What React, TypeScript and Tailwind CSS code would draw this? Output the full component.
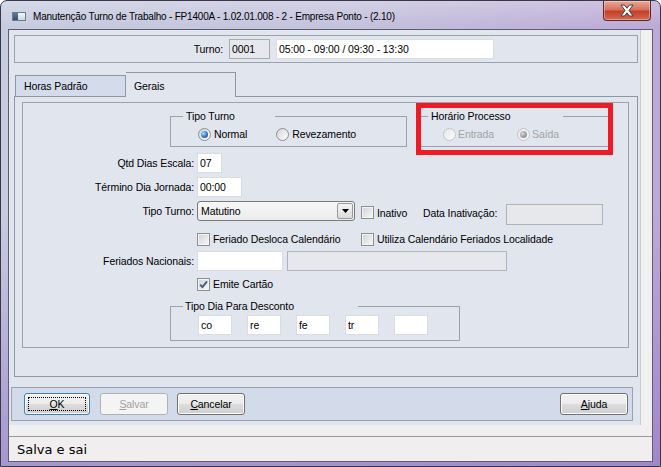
import React from 'react';

// Win7-style form: Manutenção Turno de Trabalho
type Kids = { children?: React.ReactNode };

function Radio({ checked = false, disabled = false }: { checked?: boolean; disabled?: boolean }) {
  return (
    <span
      className={
        disabled
          ? 'w-[13px] h-[13px] rounded-full border border-[#c2c4c7] bg-[linear-gradient(135deg,#e6e7e9,#fbfbfb)] flex items-center justify-center shrink-0'
          : 'w-[13px] h-[13px] rounded-full border border-[#8b8e92] bg-[linear-gradient(135deg,#d3d5d8,#fdfdfd)] flex items-center justify-center shrink-0'
      }
    >
      {checked && !disabled && (
        <span className="w-[7px] h-[7px] rounded-full bg-[radial-gradient(circle_at_35%_35%,#b5e0ff,#2f74c6_55%,#174a8c)]" />
      )}
      {checked && disabled && (
        <span className="w-[7px] h-[7px] rounded-full bg-[radial-gradient(circle_at_35%_35%,#d8d8d8,#9a9a9a_60%,#7d7d7d)]" />
      )}
    </span>
  );
}

function Check({ checked = false }: { checked?: boolean }) {
  return (
    <span className="w-[13px] h-[13px] border border-[#8e8f8f] bg-[linear-gradient(135deg,#cfd2d6,#f9f9f9)] shadow-[inset_0_0_0_1px_#f3f3f3] flex items-center justify-center shrink-0">
      {checked && (
        <svg width="11" height="11" viewBox="0 0 11 11">
          <path d="M2.2 5.6 L4.4 8.2 L9 2.4" fill="none" stroke="#4a6088" strokeWidth="2" strokeLinejoin="round" />
        </svg>
      )}
    </span>
  );
}

function GroupBox({ title, className, legendClass, children }: Kids & { title: string; className: string; legendClass: string }) {
  return (
    <fieldset className={className}>
      <legend className={legendClass}>{title}</legend>
      {children}
    </fieldset>
  );
}

function WinButton({ children, focused = false, disabled = false, className = '' }: Kids & { focused?: boolean; disabled?: boolean; className?: string }) {
  if (disabled) {
    return (
      <div className={`h-[22px] rounded-[3px] border border-[#adb2b5] bg-[#f4f4f4] text-[#a0a0a0] flex items-center justify-center ${className}`}>
        {children}
      </div>
    );
  }
  return (
    <div
      className={`relative h-[22px] rounded-[3px] border ${focused ? 'border-[#3c7fb1]' : 'border-[#707070]'} bg-[linear-gradient(to_bottom,#f2f2f2_0%,#ebebeb_50%,#dddddd_51%,#cfcfcf_100%)] shadow-[inset_0_0_0_1px_#fbfbfb] flex items-center justify-center ${className}`}
    >
      {focused && <span className="absolute inset-[3px] border border-dotted border-black" />}
      <span className="relative">{children}</span>
    </div>
  );
}

export default function App() {
  return (
    <div className="w-[661px] h-[467px] overflow-hidden bg-white font-['Liberation_Sans',Arial,sans-serif] text-[10.5px] leading-[13px] tracking-[-0.1px] text-black">
      {/* window frame */}
      <div className="w-[661px] h-[467px] rounded-t-[7px] border border-[#3a3848] bg-[linear-gradient(180deg,rgba(255,255,255,0.25)_0%,rgba(255,255,255,0)_25px,rgba(0,0,0,0)_45%,rgba(140,105,195,0.55)_100%),linear-gradient(90deg,#c7cde0_0%,#c4c1dc_55%,#bcaad6_100%)] flex flex-col">
        {/* title bar */}
        <div className="h-[28px] flex items-start shrink-0">
          <div className="mt-[11px] ml-[11px] w-[14px] h-[9px] border border-[#6c7a8c] flex">
            <span className="w-[5px] h-full bg-[linear-gradient(#5d7a98,#35506e)]" />
            <span className="flex-1 h-full bg-[linear-gradient(#f4f6f8,#cfd6de)]" />
          </div>
          <div className="ml-[7px] mt-[9px] text-[10px] leading-[13px] tracking-[-0.2px] text-black whitespace-nowrap">
            Manutenção Turno de Trabalho - FP1400A - 1.02.01.008 - 2 - Empresa Ponto - (2.10)
          </div>
          <div className="ml-auto mr-[9px] w-[48px] h-[20px] rounded-b-[4px] border border-t-0 border-[#5a2a26] bg-[linear-gradient(180deg,#e9a898_0%,#d8705c_45%,#c3412b_55%,#d46a4e_100%)] shadow-[inset_0_0_0_1px_rgba(255,255,255,0.35)] flex items-center justify-center">
            <svg width="16" height="13" viewBox="0 0 16 13">
              <path
                d="M2 1 H5.5 L8 4.2 L10.5 1 H14 L10 6.5 L14 12 H10.5 L8 8.8 L5.5 12 H2 L6 6.5 Z"
                fill="#ffffff"
                stroke="#4b3a3a"
                strokeWidth="1"
                strokeLinejoin="round"
              />
            </svg>
          </div>
        </div>

        {/* client area */}
        <div className="ml-[7px] w-[645px] h-[433px] border border-[#5f5c70] bg-[#f0f0f0] flex flex-col">
          {/* main panel */}
          <div className="w-[632px] h-[395px] bg-[#e1e5ee] border-r border-[#c6cad2] flex flex-col">
            {/* top group */}
            <div className="mt-[5px] ml-[5px] w-[624px] h-[28px] border border-[#9ba2ad] flex items-center">
              <div className="w-[208px] text-right">Turno:</div>
              <div className="ml-[6px] w-[41px] h-[20px] border border-[#a9acb3] bg-[#e6e8ec] pl-[2px] leading-[18px]">0001</div>
              <div className="ml-[6px] w-[218px] h-[20px] border border-[#d9dce2] bg-white pl-[2px] leading-[18px]">
                05:00 - 09:00 / 09:30 - 13:30
              </div>
            </div>

            {/* tabs */}
            <div className="mt-[9px] ml-[6px] h-[24px] flex items-end relative z-10">
              <div className="w-[111px] h-[21px] border border-b-0 border-[#8d98a7] bg-[#d4dcec] pl-[8px] leading-[20px]">
                Horas Padrão
              </div>
              <div className="w-[110px] h-[25px] -mb-px border border-b-0 border-l-0 border-[#8d98a7] bg-[#e1e5ee] pl-[8px] leading-[26px]">
                Gerais
              </div>
            </div>

            {/* tab page */}
            <div className="ml-[5px] w-[624px] h-[281px] border border-[#8d98a7] flex flex-col">
              <div className="relative mt-[5px] ml-[7px] w-[607px] h-[246px] border border-[#9ba2ad] flex flex-col">
                {/* group row */}
                <div className="mt-[7px] flex items-start">
                  <GroupBox
                    title="Tipo Turno"
                    className="ml-[147px] w-[237px] h-[37px] border border-[#9ba2ad]"
                    legendClass="ml-[12px] w-[92px] pl-[3px] leading-[13px]"
                  >
                    <div className="mt-[5px] flex items-center">
                      <span className="ml-[27px]"><Radio checked /></span>
                      <span className="ml-[3px]">Normal</span>
                      <span className="ml-[29px]"><Radio /></span>
                      <span className="ml-[3px]">Revezamento</span>
                    </div>
                  </GroupBox>
                  <GroupBox
                    title="Horário Processo"
                    className="ml-[13px] w-[190px] h-[37px] border border-[#9ba2ad]"
                    legendClass="ml-[7px] w-[135px] pl-[3px] leading-[13px]"
                  >
                    <div className="mt-[5px] flex items-center text-[#a3a3a3]">
                      <span className="ml-[22px]"><Radio disabled /></span>
                      <span className="ml-[2px]">Entrada</span>
                      <span className="ml-[23px]"><Radio checked disabled /></span>
                      <span className="ml-[2px]">Saída</span>
                    </div>
                  </GroupBox>
                </div>

                {/* Qtd Dias Escala */}
                <div className="mt-[6px] flex items-center">
                  <div className="w-[171px] text-right">Qtd Dias Escala:</div>
                  <div className="ml-[3px] w-[25px] h-[20px] border border-[#d9dce2] bg-white pl-[2px] leading-[18px]">07</div>
                </div>

                {/* Término */}
                <div className="mt-[4px] flex items-center">
                  <div className="w-[171px] text-right">Término Dia Jornada:</div>
                  <div className="ml-[3px] w-[45px] h-[20px] border border-[#d9dce2] bg-white pl-[2px] leading-[18px]">00:00</div>
                </div>

                {/* Tipo Turno select row */}
                <div className="mt-[4px] h-[24px] flex items-start">
                  <div className="w-[171px] text-right leading-[20px]">Tipo Turno:</div>
                  <div className="ml-[3px] w-[158px] h-[20px] rounded-[3px] border border-[#7a7a7a] bg-[linear-gradient(to_bottom,#f7f7f7,#ececec)] flex items-center">
                    <span className="flex-1 pl-[3px]">Matutino</span>
                    <span className="mr-[1px] w-[16px] h-[16px] rounded-[2px] border border-[#9a9a9a] bg-[linear-gradient(to_bottom,#f4f4f4,#dcdcdc)] flex items-center justify-center">
                      <svg width="7" height="4" viewBox="0 0 7 4">
                        <path d="M0 0 H7 L3.5 4 Z" fill="#000" />
                      </svg>
                    </span>
                  </div>
                  <span className="ml-[6px] mt-[5px]"><Check /></span>
                  <span className="ml-[3px] w-[46px] leading-[24px]">Inativo</span>
                  <span className="w-[83px] leading-[24px]">Data Inativação:</span>
                  <div className="mt-[3px] w-[97px] h-[21px] border border-[#b0b3ba] bg-[#e6e8ec]" />
                </div>

                {/* checkbox row */}
                <div className="mt-[8px] flex items-center">
                  <div className="ml-[174px] w-[164px] flex items-center">
                    <Check />
                    <span className="ml-[3px]">Feriado Desloca Calendário</span>
                  </div>
                  <Check />
                  <span className="ml-[3px]">Utiliza Calendário Feriados Localidade</span>
                </div>

                {/* Feriados Nacionais */}
                <div className="mt-[5px] flex items-center">
                  <div className="w-[171px] text-right">Feriados Nacionais:</div>
                  <div className="ml-[3px] w-[86px] h-[20px] border border-[#d9dce2] bg-white" />
                  <div className="ml-[4px] w-[220px] h-[20px] border border-[#b0b3ba] bg-[#e6e8ec]" />
                </div>

                {/* Emite Cartão */}
                <div className="mt-[7px] flex items-center">
                  <span className="ml-[174px]"><Check checked /></span>
                  <span className="ml-[3px]">Emite Cartão</span>
                </div>

                {/* Tipo Dia Para Desconto */}
                <GroupBox
                  title="Tipo Dia Para Desconto"
                  className="mt-[9px] ml-[147px] w-[290px] h-[41px] border border-[#9ba2ad]"
                  legendClass="ml-[12px] w-[175px] pl-[2px] leading-[13px]"
                >
                  <div className="mt-[2px] ml-[27px] flex gap-[15px]">
                    {['co', 're', 'fe', 'tr', ''].map((v, i) => (
                      <div key={i} className="w-[34px] h-[20px] border border-[#d9dce2] bg-white pl-[2px] leading-[18px]">
                        {v}
                      </div>
                    ))}
                  </div>
                </GroupBox>

                {/* annotation highlight */}
                <div className="absolute left-[393px] top-0 w-[197px] h-[52px] border-[5px] border-[#ed1c24]" />
              </div>
            </div>

            {/* button bar */}
            <div className="mt-[10px] ml-[2px] w-[622px] h-[34px] border border-[#9ba2ad] bg-[#d3dbeb] flex items-center">
              <WinButton focused className="ml-[12px] w-[66px]"><u>O</u>K</WinButton>
              <WinButton disabled className="ml-[10px] w-[68px]"><u>S</u>alvar</WinButton>
              <WinButton className="ml-[9px] w-[68px]"><u>C</u>ancelar</WinButton>
              <WinButton className="ml-auto mr-[4px] w-[68px]"><u>A</u>juda</WinButton>
            </div>
          </div>

          {/* status bar */}
          <div className="mt-[11px] h-[25px] border-t border-[#9a9a9a] bg-[#f0eeee] pl-[8px] flex items-center font-['DejaVu_Sans',sans-serif] text-[13px] tracking-normal">
            Salva e sai
          </div>
        </div>
      </div>
    </div>
  );
}
